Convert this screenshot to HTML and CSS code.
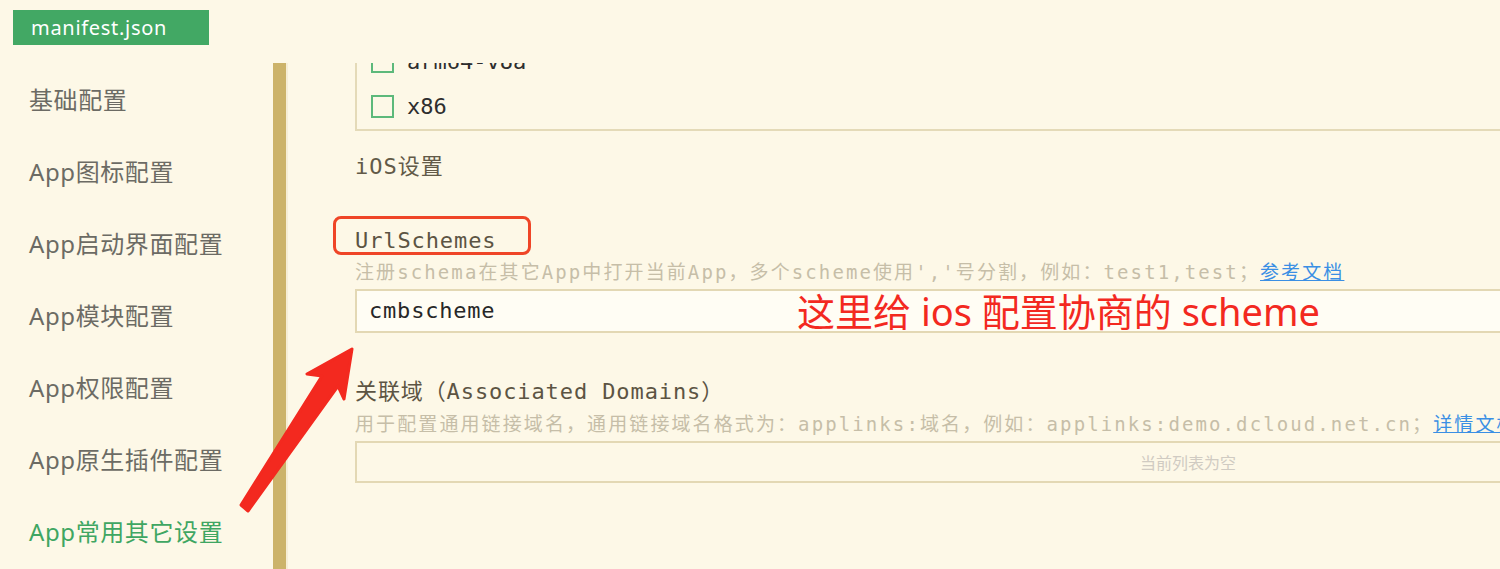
FILE: index.html
```html
<!DOCTYPE html>
<html lang="zh-CN">

<head>
    <meta charset="UTF-8">
    <meta name="viewport" content="width=device-width, initial-scale=1.0">
    <title>manifest.json</title>
    <link rel="stylesheet" href="styles.css">
</head>

<body>
    <div class="tabs">
        <div class="tab active">manifest.json</div>
    </div>

    <div class="editor">
        <ul class="side-nav">
            <li>基础配置</li>
            <li>App图标配置</li>
            <li>App启动界面配置</li>
            <li>App模块配置</li>
            <li>App权限配置</li>
            <li>App原生插件配置</li>
            <li class="current">App常用其它设置</li>
        </ul>
        <div class="splitter"></div>

        <div class="pane">
            <div class="pane-inner">
                <div class="check-group">
                    <label class="check-row"><span class="box"></span>armeabi-v7a</label>
                    <label class="check-row"><span class="box"></span>arm64-v8a</label>
                    <label class="check-row"><span class="box"></span>x86</label>
                </div>

                <h3 class="section-title">iOS设置</h3>

                <div class="field">
                    <div class="field-label">UrlSchemes</div>
                    <div class="field-desc">注册schema在其它App中打开当前App，多个scheme使用','号分割，例如：test1,test；<a href="#">参考文档</a></div>
                    <div class="text-input">cmbscheme</div>
                </div>

                <div class="field">
                    <div class="field-label">关联域（Associated Domains）</div>
                    <div class="field-desc">用于配置通用链接域名，通用链接域名格式为：applinks:域名，例如：applinks:demo.dcloud.net.cn；<a href="#">详情文档</a></div>
                    <div class="list-box">当前列表为空</div>
                </div>
            </div>
        </div>
    </div>

    <!-- markup drawn on top of the screenshot -->
    <div class="note-box"></div>
    <div class="note-text">这里给 ios 配置协商的 scheme</div>
    <svg class="note-arrow" width="1500" height="569" viewBox="0 0 1500 569">
        <polygon points="352,349 307,374 322,376 241,505 248,511 338,386 344,399"
            fill="#f3291f" stroke="#f3291f" stroke-width="3" stroke-linejoin="round" />
    </svg>
</body>

</html>
```

FILE: styles.css
```css
body {
    margin: 0;
    padding: 0;
    height: 569px;
    overflow: hidden;
    background-color: #fdf8e7;
    font-family: "Noto Sans", "Noto Sans CJK SC", sans-serif;
    display: flex;
    flex-direction: column;
}

.tabs {
    display: flex;
    padding: 10px 0 0 13px;
}

.tab {
    width: 196px;
    height: 35px;
    box-sizing: border-box;
    padding-left: 18px;
    line-height: 35px;
    font-size: 20px;
    letter-spacing: 0.7px;
    color: #fff;
}

.tab.active {
    background: #42a864;
}

.editor {
    flex: 1;
    display: flex;
    margin-top: 18px;
    min-height: 0;
}

.side-nav {
    list-style: none;
    margin: 0;
    padding: 1px 0 0;
    width: 273px;
    flex-shrink: 0;
}

.side-nav li {
    height: 72px;
    line-height: 72px;
    padding-left: 29px;
    font-size: 24px;
    letter-spacing: 0.6px;
    color: #6c6b64;
}

.side-nav li.current {
    color: #3fa662;
}

.splitter {
    width: 13px;
    flex-shrink: 0;
    background: #ccb36a;
    border-right: 2px solid #f6eed6;
}

.pane {
    flex: 1;
    overflow: hidden;
    position: relative;
}

.pane-inner {
    width: 1666px;
    margin: -79px 0 0 67px;
    font-family: "DejaVu Sans Mono", "Noto Sans CJK SC", monospace;
}

/* cpu types, scrolled half out of view */
.check-group {
    border: 2px solid #e4dab8;
    padding: 8px 14px 0;
}

.check-row {
    display: flex;
    align-items: center;
    height: 45px;
    font-size: 22px;
    color: #2e2e2e;
}

.check-row .box {
    width: 19px;
    height: 19px;
    border: 2px solid #5db97b;
    margin-right: 13px;
}

.section-title {
    margin: 21px 0 0;
    font-weight: normal;
    font-size: 22px;
    line-height: 30px;
    letter-spacing: 1px;
    color: #625a48;
}

.field {
    margin-top: 44px;
}

.field-label {
    font-size: 22px;
    line-height: 30px;
    letter-spacing: 0.9px;
    color: #5c5443;
}

.field-desc {
    margin-top: 3px;
    font-size: 19px;
    line-height: 26px;
    letter-spacing: 2.1px;
    color: #c6bea8;
    white-space: nowrap;
}

.field-desc a {
    color: #3a8fe4;
    text-decoration: underline;
}

.text-input {
    margin-top: 4px;
    height: 40px;
    line-height: 40px;
    padding-left: 12px;
    border: 2px solid #e3d8b4;
    background: #fffdf4;
    font-size: 22px;
    letter-spacing: 0.8px;
    color: #272727;
}

.field:last-child .field-desc {
    margin-top: 4px;
}

.list-box {
    margin-top: 4px;
    height: 38px;
    line-height: 38px;
    border: 2px solid #e3d8b4;
    text-align: center;
    font-family: "Noto Sans CJK SC", sans-serif;
    font-size: 16px;
    color: #d0cbc2;
}

/* annotations */
.note-box {
    position: absolute;
    left: 333px;
    top: 216px;
    width: 192px;
    height: 33px;
    border: 3px solid #ef4527;
    border-radius: 8px;
}

.note-text {
    position: absolute;
    left: 797px;
    top: 287px;
    font-size: 38px;
    line-height: 48px;
    color: #f3291f;
    white-space: nowrap;
}

.note-arrow {
    position: absolute;
    left: 0;
    top: 0;
    pointer-events: none;
}
```
